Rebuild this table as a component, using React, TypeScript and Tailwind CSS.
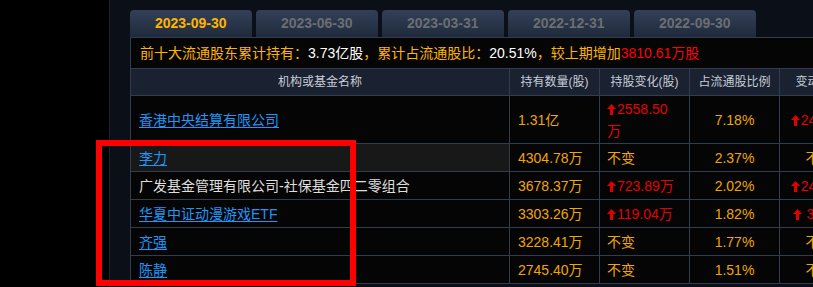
import React from "react";

type Cell = string | { up: string } | { same: true };

type Row = {
  name: string;
  link: boolean;
  hold: string;
  change: Cell;
  ratio: string;
  delta: Cell;
  tall?: boolean;
  hover?: boolean;
};

const rows: Row[] = [
  { name: "香港中央结算有限公司", link: true, hold: "1.31亿", change: { up: "2558.50万" }, ratio: "7.18%", delta: { up: "24.23%" }, tall: true },
  { name: "李力", link: true, hold: "4304.78万", change: { same: true }, ratio: "2.37%", delta: { same: true }, hover: true },
  { name: "广发基金管理有限公司-社保基金四二零组合", link: false, hold: "3678.37万", change: { up: "723.89万" }, ratio: "2.02%", delta: { up: "24.50%" } },
  { name: "华夏中证动漫游戏ETF", link: true, hold: "3303.26万", change: { up: "119.04万" }, ratio: "1.82%", delta: { up: " 3.74%" } },
  { name: "齐强", link: true, hold: "3228.41万", change: { same: true }, ratio: "1.77%", delta: { same: true } },
  { name: "陈静", link: true, hold: "2745.40万", change: { same: true }, ratio: "1.51%", delta: { same: true } },
];

const tabs = ["2023-09-30", "2023-06-30", "2023-03-31", "2022-12-31", "2022-09-30"];

const UpArrow = () => (
  <svg width="9" height="11" viewBox="0 0 9 11" className="inline-block mr-[1px] align-[-1px]">
    <path d="M4.5 0 L9 5 H6 V11 H3 V5 H0 Z" fill="#e00000" />
  </svg>
);

const ChangeText = ({ c }: { c: Cell }) => {
  if (typeof c === "string") return <span>{c}</span>;
  if ("same" in c) return <span className="text-[#f2a600]">不变</span>;
  return (
    <span className="text-[#e60000] whitespace-pre-wrap">
      <UpArrow />
      {c.up}
    </span>
  );
};

export default function App() {
  return (
    <div className="w-[813px] h-[287px] overflow-hidden bg-black flex relative font-['Liberation_Sans','Noto_Sans_CJK_SC',sans-serif]">
      <div className="w-[109px] shrink-0 bg-black" />
      <div className="w-[704px] shrink-0 border-l border-[#1c2230] bg-[#0b0f17] pl-[20px] pt-[10px]">
        {/* tabs */}
        <div className="flex gap-[4.5px]">
          {tabs.map((t, i) => (
            <div
              key={t}
              className={`w-[121.5px] h-[27px] shrink-0 rounded-t-[4px] bg-gradient-to-b from-[#334057] to-[#1f2a3b] flex items-center justify-center text-[14px] font-bold ${
                i === 0 ? "text-[#ffb400]" : "text-[#6b6e72]"
              }`}
            >
              {t}
            </div>
          ))}
        </div>

        <div className="w-[729px]">
          {/* summary */}
          <div className="h-[32px] border-y border-l border-[#323c4c] bg-[#050505] flex items-center pl-[9px] text-[14px] whitespace-nowrap">
            <span className="text-[#ffb400]">前十大流通股东累计持有：</span>
            <span className="text-white">3.73亿股</span>
            <span className="text-[#ffb400]">，累计占流通股比：</span>
            <span className="text-white">20.51% </span>
            <span className="text-[#ffb400]">，较上期增加</span>
            <span className="text-[#ff0000]">3810.61万股</span>
          </div>

          {/* table */}
          <div className="grid grid-cols-[379px_90px_90px_90px_80px] border-l border-[#323c4c] text-[14px]">
            {["机构或基金名称", "持有数量(股)", "持股变化(股)", "占流通股比例", "变动比例"].map((h) => (
              <div
                key={h}
                className="h-[27px] bg-[#1a2130] border-r border-b border-[#323c4c] flex items-center justify-center text-[12px] text-[#c7ced8] whitespace-nowrap"
              >
                {h}
              </div>
            ))}
            {rows.map((r) => {
              const h = r.tall ? "h-[48px]" : "h-[28px]";
              const cell = `${h} border-r border-b border-[#323c4c] flex items-center leading-[22px]`;
              return (
                <React.Fragment key={r.name}>
                  <div className={`${cell} pl-[8px] ${r.hover ? "bg-[#181818]" : "bg-[#050505]"}`}>
                    {r.link ? (
                      <span className="text-[#1e96f7] underline underline-offset-2">{r.name}</span>
                    ) : (
                      <span className="text-[#dedede]">{r.name}</span>
                    )}
                  </div>
                  <div className={`${cell} bg-[#050505] pl-[8px] text-[#f2a600]`}>{r.hold}</div>
                  <div className={`${cell} bg-[#050505] pl-[7px] pr-[10px]`}>
                    <ChangeText c={r.change} />
                  </div>
                  <div className={`${cell} bg-[#050505] justify-center text-[#f2a600]`}>{r.ratio}</div>
                  <div className={`${cell} bg-[#050505] justify-center whitespace-nowrap`}>
                    <ChangeText c={r.delta} />
                  </div>
                </React.Fragment>
              );
            })}
          </div>
        </div>
      </div>

      {/* annotation box */}
      <div className="absolute left-[96px] top-[140px] w-[260px] h-[146px] border-[6px] border-[#ff0000]" />
    </div>
  );
}
